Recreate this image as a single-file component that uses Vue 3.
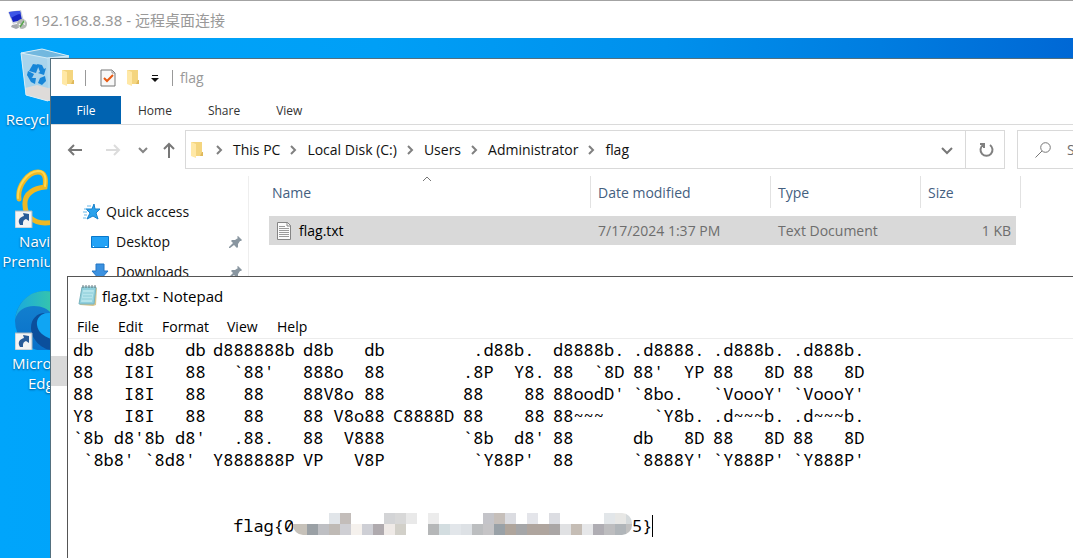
<script setup>
const crumbs = ['This PC', 'Local Disk (C:)', 'Users', 'Administrator', 'flag']
const tabs = ['File', 'Home', 'Share', 'View']
const menus = ['File', 'Edit', 'Format', 'View', 'Help']

const eight = ['.d888b.', "88   8D", "`VoooY'", '.d~~~b.', '88   8D', "`Y888P'"]
const banner = [
  ['db   d8b   db', '88   I8I   88', '88   I8I   88', 'Y8   I8I   88', "`8b d8'8b d8'", " `8b8' `8d8'"],
  ['d888888b', "  `88'", '   88', '   88', '  .88.', 'Y888888P'],
  ['d8b   db', '888o  88', '88V8o 88', '88 V8o88', '88  V888', 'VP   V8P'],
  ['', '', '', 'C8888D', '', ''],
  [' .d88b.', '.8P  Y8.', '88    88', '88    88', "`8b  d8'", " `Y88P'"],
  ['d8888b.', '88  `8D', "88oodD'", '88~~~', '88', '88'],
  ['.d8888.', "88'  YP", '`8bo.', '  `Y8b.', 'db   8D', "`8888Y'"],
  eight,
  eight
].map(lines => lines.join('\n'))

const W = '#ffffff'
const mosaic = [
  [W, W, W, '#e1e5e9', '#c3bdba', W, W, W, '#d3d4d6', '#d8d8d8', '#e9e9e9', W, '#ececec', W, W, W, W, '#c4c4c9', '#c6bfba', '#dbdce1', W, '#e4e5ea', W, '#dcdde2', W, W, W, W, '#e2e6e9', '#e7e7e5', '#d5dadc'],
  ['#c6c1b9', '#9aa0a5', '#bebfc3', '#bfbab5', '#cfcfd4', '#f5f1ed', '#cecfd5', '#afaaae', '#efeae7', '#d2d0c9', W, W, '#b5b7b8', '#d3dde0', '#e2e6ea', '#dde1e5', '#bcbec0', '#c5c4c6', '#99a1a7', '#afa59c', '#a5a6a8', '#afa59e', '#afa59e', '#aaa6a5', '#e0e1e3', '#c5bdb5', '#e6e7e9', '#afadb3', '#bdbdbf', '#b0b5b9', '#c0c0c0']
]
const cells = mosaic.flatMap((row, r) =>
  row.map((fill, c) => ({ fill, x: c === 0 ? 0 : 3 + c * 11, y: r * 11, w: c === 0 ? 14 : 11 }))
)
</script>

<template>
  <div class="session">
    <header class="remote-bar">
      <svg class="i20" viewBox="0 0 20 20">
        <path d="M0 2l13-2 3 11-11 3z" fill="#c9cedb" />
        <path d="M1 2l11-1 2 9-9 2z" fill="#1524c4" />
        <path d="M1 2l11-1 1 3c-4 0-6 2-10 4z" fill="#3d55e6" />
        <path d="M4 15l5-1 4 3-5 2-5-2z" fill="#a4a8ad" />
        <circle cx="14" cy="14" r="5" fill="#b4b9b5" />
        <path d="M11 14l2 1.500-2 2M17 11l-2 2 2 1.500" fill="none" stroke="#fff" stroke-width="1.200" />
        <path d="M12 17l4-6" stroke="#58a34c" stroke-width="1.500" />
      </svg>
      <h1>192.168.8.38 - 远程桌面连接</h1>
    </header>

    <main class="desktop">
      <div class="icons">
        <button class="shortcut">
          <svg viewBox="0 0 60 60">
            <path d="M6 7L27 3l27 7-5 44-16 1-22-6z" fill="#9fd0ec" />
            <path d="M6 7l21-4 27 7-22 2z" fill="#72b8df" />
            <path d="M6 7l26 5 1 43-22-6z" fill="#a9d4ec" />
            <path d="M32 12l22-2-5 44-16 1z" fill="#b4daee" />
            <path d="M10 42l12-3 11 3 17 1-1 10-16 2-22-6z" fill="#dedbd9" />
            <path d="M6 7l21-4 27 7-22 2zM6 7l5 42 22 6" fill="none" stroke="#d6edf7" />
            <g fill="#1786d8">
              <path d="M14 25l4-7 6 1-3 8z" /><path d="M22 18l5 1 2 4 2-1-2 7-6-2 2-1z" />
              <path d="M30 30l1 5-4 4-4-2 2-5z" /><path d="M21 32l-1 6-4-2-4-7 2-1 3 4z" />
              <path d="M12 29l1-4 6 3-2 4z" />
            </g>
          </svg>
          <span>Recycle Bin</span>
        </button>
        <button class="shortcut">
          <svg viewBox="0 0 60 60">
            <path d="M4 31C2 17 14 4 23 4c8 0 8 8 7 15-10 1-21 6-20 18 0 10 8 18 20 18 16 0 25-8 21-22-2-6-8-8-12-16-2-5-1-10 1-13" fill="none" stroke="#eeb824" stroke-width="5" stroke-linecap="round" />
            <path d="M3 30C2 18 12 4 23 3c8 0 8 8 7 15" fill="none" stroke="#ffd84f" stroke-width="2" stroke-linecap="round" />
            <path d="M0 43h17v17H0z" fill="#f4f4f4" stroke="#a7b7c1" />
            <path d="M5 57c-3-5 0-8 4-9l-1-3 6 1v7l-3-2c-3 1-3 3-3 6z" fill="#285b98" />
          </svg>
          <span>Navicat Premium 16</span>
        </button>
        <button class="shortcut">
          <svg viewBox="0 0 60 60">
            <defs>
              <linearGradient id="edge-top"><stop offset="0" stop-color="#19a9df" /><stop offset="1" stop-color="#48d68c" /></linearGradient>
              <linearGradient id="edge-body" x2="0" y2="1"><stop offset="0" stop-color="#1684d0" /><stop offset="1" stop-color="#0870c9" /></linearGradient>
            </defs>
            <circle cx="30" cy="31" r="30" fill="url(#edge-body)" />
            <path d="M0 29C3 12 14 1 30 1c18 0 30 13 30 26 0 10-8 15-17 15-8 0-9-3-6-6 5-8-2-20-18-20-10 0-16 5-19 13z" fill="url(#edge-top)" />
            <path d="M30 23c-8 0-14 6-14 15 0 11 11 22 21 22 9-1 16-7 20-14-14 6-31 2-32-12 0-5 2-9 5-11z" fill="#0b4f9c" />
            <path d="M36 23c-10-1-15 5-14 12 1 7 6 11 14 14z" fill="#10a5f3" />
            <path d="M0 43h17v17H0z" fill="#f4f4f4" stroke="#a7b7c1" />
            <path d="M5 57c-3-5 0-8 4-9l-1-3 6 1v7l-3-2c-3 1-3 3-3 6z" fill="#285b98" />
          </svg>
          <span>Microsoft Edge</span>
        </button>
      </div>

      <section class="explorer">
        <div class="quick-bar">
          <svg class="folder" viewBox="0 0 14 18"><path d="M1 1h11v14H5z" fill="#f4d57f" /><path d="M12 11h1v4h-3z" fill="#dfb95c" /><path d="M1 1l5 2v14l-5-2z" fill="#ffe8a6" /></svg>
          <i class="bar"></i>
          <svg class="check" viewBox="0 0 16 18"><path d="M1 1h11l3 3v13H1z" fill="#f8f8f8" stroke="#777" /><path d="M12 1v3h3" fill="none" stroke="#999" /><path d="M4 9l3 3 6-6" fill="none" stroke="#e75a13" stroke-width="2" /></svg>
          <svg class="folder" viewBox="0 0 14 18"><path d="M1 1h11v14H5z" fill="#f4d57f" /><path d="M12 11h1v4h-3z" fill="#dfb95c" /><path d="M1 1l5 2v14l-5-2z" fill="#ffe8a6" /></svg>
          <svg class="more" viewBox="0 0 8 8"><path d="M1 1h6v1H1zM0 4h8L4 8z" fill="#111" /></svg>
          <i class="bar"></i>
          <span>flag</span>
        </div>

        <nav class="tabs">
          <button v-for="tab in tabs" :key="tab" :class="{ primary: tab === 'File' }">{{ tab }}</button>
        </nav>

        <div class="location">
          <div class="history">
            <button aria-label="Back"><svg viewBox="0 0 16 16"><path d="M15 8H2M7 3L2 8l5 5" stroke="#777" /></svg></button>
            <button aria-label="Forward"><svg viewBox="0 0 16 16"><path d="M1 8h13M9 3l5 5-5 5" stroke="#dcdcdc" /></svg></button>
            <button aria-label="Recent locations"><svg viewBox="0 0 16 16"><path d="M4 6l4 4 4-4" stroke="#858585" /></svg></button>
            <button aria-label="Up"><svg viewBox="0 0 16 16"><path d="M8 16V2M3 7l5-5 5 5" stroke="#777" /></svg></button>
          </div>
          <div class="address">
            <svg class="folder" viewBox="0 0 14 18"><path d="M1 1h11v14H5z" fill="#f4d57f" /><path d="M12 11h1v4h-3z" fill="#dfb95c" /><path d="M1 1l5 2v14l-5-2z" fill="#ffe8a6" /></svg>
            <template v-for="crumb in crumbs" :key="crumb">
              <svg class="chev" viewBox="0 0 7 10"><path d="M1 1l4 4-4 4" /></svg>
              <button>{{ crumb }}</button>
            </template>
            <button class="drop" aria-label="Previous locations"><svg viewBox="0 0 12 12"><path d="M1 4l5 5 5-5" /></svg></button>
            <button class="refresh" aria-label="Refresh"><svg viewBox="0 0 16 16"><path d="M12 3A6 6 0 1 1 5 3M2 2h4v4" /></svg></button>
          </div>
          <label class="search">
            <svg viewBox="0 0 16 16"><circle cx="10.500" cy="5.500" r="4.800" /><path d="M7 9l-6.500 6.500" /></svg>
            <input type="search" aria-label="Search flag" placeholder="Search flag" />
          </label>
        </div>

        <div class="body">
          <ul class="tree">
            <li class="root">
              <svg class="i18" viewBox="0 0 18 18"><path d="M11 1l1 5h5l-4 4 2 6-5-3-6 3 3-6-4-4h6z" fill="#2ba2ec" stroke="#1680cb" /><path d="M4 3h4M1 6h3M0 9h4M1 12h3M0 15h3" stroke="#69b9ea" /></svg>
              Quick access
            </li>
            <li>
              <svg class="i18" viewBox="0 0 18 18"><path d="M.5 3.500h17v11H.5z" fill="#22a2f6" stroke="#0877ca" /><path d="M2 13.500h1M14 13.500h2" stroke="#fff" /></svg>
              <span>Desktop</span>
              <svg class="pin" viewBox="0 0 14 14"><path d="M9 1l4 4-1 1-1 0-2 3v3l-1 1-3-3-4 3H0v-1l4-4-2-2 1-1h3l3-2-1-1z" fill="#8996a0" /></svg>
            </li>
            <li>
              <svg class="i18" viewBox="0 0 18 18"><path d="M5 1h8v7h4l-8 9-8-9h4z" fill="#3b91e0" stroke="#2476c4" /></svg>
              <span>Downloads</span>
              <svg class="pin" viewBox="0 0 14 14"><path d="M9 1l4 4-1 1-1 0-2 3v3l-1 1-3-3-4 3H0v-1l4-4-2-2 1-1h3l3-2-1-1z" fill="#8996a0" /></svg>
            </li>
            <li class="current"></li>
          </ul>
          <table>
            <colgroup><col class="c-name" /><col class="c-date" /><col class="c-type" /><col class="c-size" /></colgroup>
            <thead>
              <tr>
                <th><svg class="sort" viewBox="0 0 10 6"><path d="M1 5l4-4 4 4" /></svg>Name</th>
                <th>Date modified</th>
                <th>Type</th>
                <th>Size</th>
              </tr>
            </thead>
            <tbody>
              <tr>
                <td>
                  <div class="file">
                    <svg viewBox="0 0 16 20"><path d="M1.500 1.500h10l3 3v14h-13z" fill="#fbfbfb" stroke="#858585" /><path d="M11 1v4h4" fill="none" stroke="#858585" /><path d="M3 5.500h6M3 7.500h10M3 9.500h10M3 11.500h10M3 13.500h10M3 15.500h10" stroke="#9a9a9a" /></svg>
                    flag.txt
                  </div>
                </td>
                <td>7/17/2024 1:37 PM</td>
                <td>Text Document</td>
                <td>1 KB</td>
              </tr>
            </tbody>
          </table>
        </div>
      </section>

      <section class="notepad">
        <div class="note-title">
          <svg viewBox="0 0 20 22">
            <path d="M4 3h15l-1 17-3 1-13-1z" fill="#d9c58d" />
            <path d="M4 2h14l-2 17H1z" fill="#8fd0dd" stroke="#79b3be" />
            <path d="M5 5h11l-2 12H3z" fill="#b5e4eb" />
            <path d="M5 8h10M5 11h9M4 14h10" stroke="#8accd8" />
            <path d="M5 0v3M8 0v3M11 0v3M14 0v3M17 0v3" stroke="#697b80" />
          </svg>
          <h2>flag.txt - Notepad</h2>
        </div>
        <nav class="menu">
          <button v-for="menu in menus" :key="menu">{{ menu }}</button>
        </nav>
        <div class="text">
          <div class="banner">
            <pre v-for="(glyph, i) in banner" :key="i">{{ glyph }}</pre>
          </div>
          <div class="flag-line">
            <span class="head">flag{0</span>
            <svg class="mosaic" viewBox="0 0 339 22">
              <defs><clipPath id="pill"><rect width="339" height="22" rx="10" /></clipPath></defs>
              <g clip-path="url(#pill)" shape-rendering="crispEdges">
                <rect v-for="(c, i) in cells" :key="i" :x="c.x" :y="c.y" :width="c.w" height="11" :fill="c.fill" />
              </g>
            </svg>
            <span class="tail">5}</span>
          </div>
        </div>
      </section>
    </main>
  </div>
</template>

<style>
body {
  margin: 0;
  overflow: hidden;
}
</style>

<style scoped>
.session {
  display: flex;
  flex-direction: column;
  height: 100vh;
  overflow: hidden;
  font: 14px/20px "Open Sans", "Noto Sans", "Noto Sans CJK SC", sans-serif;
  color: #111;
}
* { box-sizing: border-box; }
svg { display: block; flex: none; }
button {
  padding: 0;
  border: 0;
  background: none;
  font: inherit;
  color: inherit;
  text-align: left;
  white-space: nowrap;
}
h1, h2 { margin: 0; font-weight: 400; }

.remote-bar {
  flex: none;
  display: flex;
  align-items: center;
  gap: 5px;
  height: 38px;
  padding-left: 8px;
  border-top: 1px solid #a3a3a3;
  background: #fff;
}
.remote-bar h1 { font-family: "Noto Sans", "Noto Sans CJK SC", sans-serif; font-size: 15px; color: #999; }
.i20 { width: 20px; height: 20px; }
.i18 { width: 18px; height: 18px; }

.desktop {
  position: relative;
  flex: 1;
  min-height: 0;
  overflow: hidden;
  background: linear-gradient(90deg, #00a5fb 0%, #009ff6 35%, #0090ec 62%, #007de0 82%, #0068d5 100%);
}
.icons {
  display: flex;
  flex-direction: column;
  gap: 18px;
  width: 90px;
  padding-top: 8px;
}
.shortcut {
  display: flex;
  flex-direction: column;
  align-items: center;
  gap: 3px;
  height: 104px;
  font-size: 15px;
  color: #fff;
  text-align: center;
  white-space: normal;
  text-shadow: 0 1px 2px #00528c;
}
.shortcut svg { width: 60px; height: 60px; }
.shortcut span { width: 90px; }

.explorer {
  position: absolute;
  inset: 20px 0 0 50px;
  display: flex;
  flex-direction: column;
  border: solid #53707f;
  border-width: 1px 0 0 1px;
  background: #fff;
}
.quick-bar {
  display: flex;
  align-items: center;
  height: 37px;
  padding-left: 10px;
  color: #999;
}
.folder { width: 14px; height: 18px; }
.bar { width: 1px; height: 16px; background: #999; }
.quick-bar .bar { margin: 0 14px 0 10px; }
.check { width: 16px; height: 18px; margin-right: 10px; }
.more { width: 8px; height: 8px; margin-left: 11px; }
.quick-bar .more + .bar { margin: 0 7px 0 13px; }

.tabs {
  display: flex;
  height: 29px;
  border-bottom: 1px solid #dadada;
  font-size: 12px;
  color: #333;
}
.tabs button { padding: 1px 19px 0 17px; }
.tabs .primary { width: 70px; padding: 1px 0 0; background: #0063b1; color: #fff; text-align: center; }

.location {
  display: flex;
  height: 51px;
  padding-top: 5px;
}
.history {
  display: flex;
  align-items: center;
  width: 134px;
  height: 39px;
  padding-left: 16px;
}
.history svg { width: 16px; height: 16px; fill: none; stroke-width: 2; }
.history button { margin-right: 22px; }
.history button:nth-child(n + 2) { margin-right: 14px; }
.history button:nth-child(3) { margin-right: 10px; }
.address {
  flex: 1;
  display: flex;
  align-items: center;
  height: 39px;
  padding-left: 4px;
  border: 1px solid #d9d9d9;
}
.chev { width: 7px; height: 10px; margin: 0 10px; fill: none; stroke: #808080; stroke-width: 2; }
.address .folder + .chev { margin-left: 12px; }
.drop { margin-left: auto; padding: 0 12px; }
.drop svg { width: 12px; height: 12px; fill: none; stroke: #777; stroke-width: 2; }
.refresh { align-self: stretch; width: 39px; padding-left: 12px; border-left: 1px solid #d9d9d9; }
.refresh svg { width: 16px; height: 16px; fill: none; stroke: #808080; stroke-width: 2; }
.search {
  flex: 0 0 56px;
  display: flex;
  align-items: center;
  gap: 16px;
  height: 39px;
  margin-left: 12px;
  padding-left: 17px;
  border: 1px solid #d9d9d9;
  border-right: 0;
  overflow: hidden;
}
.search svg { width: 16px; height: 16px; fill: none; stroke: #777; }
.search input { flex: none; width: 160px; padding: 0; border: 0; font: inherit; }
.search input::placeholder { color: #6d6d6d; opacity: 1; }

.body { flex: 1; display: flex; min-height: 0; }
.tree {
  width: 198px;
  margin: 0;
  padding: 21px 0 0;
  border-right: 1px solid #eee;
  list-style: none;
}
.tree li { display: flex; align-items: center; gap: 7px; height: 30px; padding: 0 5px 0 40px; }
.tree .root { gap: 5px; padding-left: 32px; }
.tree .current { margin-top: 69px; background: #d9d9d9; }
.pin { width: 14px; height: 14px; margin-left: auto; }

table {
  table-layout: fixed;
  align-self: flex-start;
  width: 752px;
  margin-left: 20px;
  border-spacing: 0;
}
.c-name { width: 322px; }
.c-date { width: 180px; }
.c-type { width: 150px; }
.c-size { width: 100px; }
th {
  position: relative;
  height: 32px;
  padding: 2px 0 0 7px;
  border-right: 1px solid #e2e2e2;
  font-weight: 400;
  text-align: left;
  color: #44607f;
}
th:first-child { padding-left: 3px; }
.sort { position: absolute; left: 153px; top: 0; width: 10px; height: 6px; fill: none; stroke: #777; }
td {
  height: 37px;
  padding: 0 0 0 7px;
  border: 0 solid transparent;
  border-top-width: 8px;
  background: #d9d9d9;
  background-clip: padding-box;
  color: #6d6d6d;
}
td:first-child { color: #000; }
td:last-child { border-right-width: 5px; padding-right: 5px; text-align: right; }
.file { display: flex; align-items: center; gap: 7px; }
.file svg { width: 16px; height: 20px; }

.notepad {
  position: absolute;
  inset: 238px 0 0 67px;
  border: solid #555;
  border-width: 1px 0 0 1px;
  background: #fff;
  color: #000;
}
.note-title { display: flex; align-items: center; gap: 4px; height: 38px; padding-left: 10px; }
.note-title svg { width: 20px; height: 22px; }
.note-title h2 { font-size: 15px; }
.menu {
  display: grid;
  grid-template-columns: 41px 44px 65px 50px 50px;
  height: 24px;
  padding-left: 9px;
  border-bottom: 1px solid #ececec;
}
.text { padding-left: 5px; font: 17px/22px "Noto Sans Mono", "Liberation Mono", monospace; }
.banner {
  display: grid;
  grid-template-columns: 140px 90px 90px 70px 90px 80px 80px 80px 80px;
}
pre { margin: 0; font: inherit; }
.flag-line { display: flex; align-items: center; margin-top: 44px; padding-left: 160px; }
.head { width: 60px; }
.mosaic { align-self: flex-start; width: 339px; height: 22px; margin-top: -2px; }
.tail { border-right: 1px solid #000; }
</style>
